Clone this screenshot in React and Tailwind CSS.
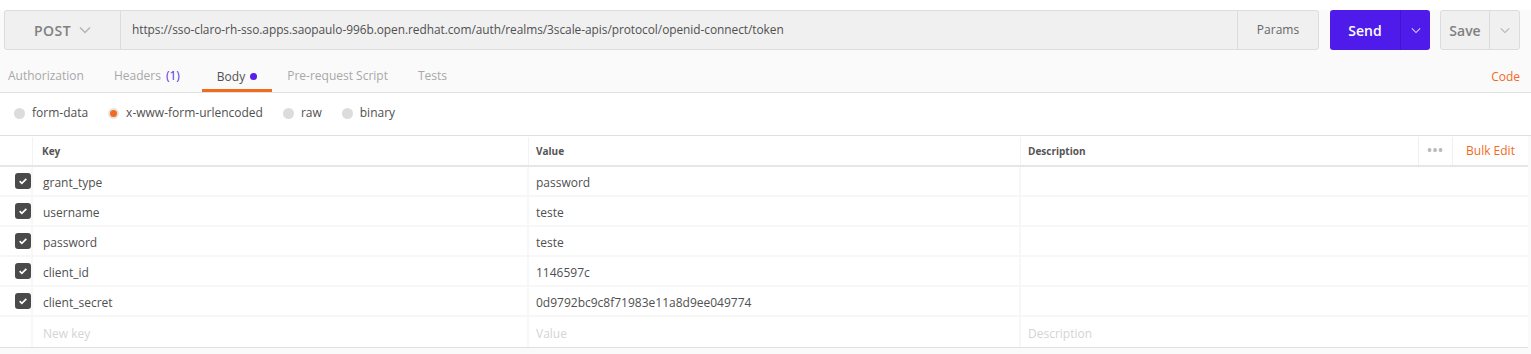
import React from "react";

const Chevron = ({ className }) => (
  <svg viewBox="0 0 12 8" className={className} fill="none" stroke="currentColor" strokeWidth="1.3">
    <path d="M1 1.5l5 5 5-5" />
  </svg>
);

const Check = () => (
  <div className="w-4 h-4 rounded-[3px] bg-[#4a4a4a] flex items-center justify-center">
    <svg viewBox="0 0 12 12" className="w-[10px] h-[10px]" fill="none" stroke="white" strokeWidth="2">
      <path d="M2 6.2l2.6 2.6L10 3.4" />
    </svg>
  </div>
);

const Radio = ({ label, on }) => (
  <label className="flex items-center mr-[20px]">
    <span
      className={`w-[11px] h-[11px] rounded-full mr-[7px] flex items-center justify-center ${
        on ? "bg-[#e5e5e5]" : "bg-[#dcdcdc]"
      }`}
    >
      {on && <span className="w-[7px] h-[7px] rounded-full bg-[#f26b1d]" />}
    </span>
    <span>{label}</span>
  </label>
);

const rows = [
  ["grant_type", "password"],
  ["username", "teste"],
  ["password", "teste"],
  ["client_id", "1146597c"],
  ["client_secret", "0d9792bc9c8f71983e11a8d9ee049774"],
];

export default function App() {
  return (
    <div
      className="min-h-screen bg-[#fafafa] text-[#505050] text-[12px]"
      style={{ fontFamily: '"Open Sans", "Liberation Sans", sans-serif' }}
    >
      {/* request bar */}
      <div className="flex items-stretch h-[40px] mt-[10px] pl-[4px] pr-[11px]">
        <div className="flex flex-1 border border-[#dcdcdc] rounded-[3px] bg-[#f0f0f0]">
          <div className="w-[116px] flex items-center justify-center border-r border-[#dcdcdc] text-[14px] font-semibold text-[#808080] tracking-[0.5px]">
            <span>POST</span>
            <Chevron className="w-[12px] h-[8px] ml-[8px] text-[#b3b3b3]" />
          </div>
          <div className="flex-1 flex items-center pl-[11px] text-[11.9px] tracking-[-0.05px] text-[#505050]">
            https://sso-claro-rh-sso.apps.saopaulo-996b.open.redhat.com/auth/realms/3scale-apis/protocol/openid-connect/token
          </div>
          <div className="w-[81px] flex items-center justify-center border-l border-[#dcdcdc] text-[12px] text-[#666]">
            Params
          </div>
        </div>
        <div className="ml-[11px] w-[100px] flex rounded-[3px] bg-[#4f1bea] text-white">
          <div className="flex-1 flex items-center justify-center text-[14px] font-semibold">Send</div>
          <div className="w-[30px] flex items-center justify-center border-l border-[#4312cc]">
            <Chevron className="w-[10px] h-[7px] text-[#d6ccff]" />
          </div>
        </div>
        <div className="ml-[10px] w-[80px] flex rounded-[3px] bg-[#f0f0f0] border border-[#dcdcdc]">
          <div className="flex-1 flex items-center justify-center text-[14px] font-semibold text-[#808080]">Save</div>
          <div className="w-[30px] flex items-center justify-center border-l border-[#dcdcdc]">
            <Chevron className="w-[10px] h-[7px] text-[#b3b3b3]" />
          </div>
        </div>
      </div>

      {/* tabs */}
      <div className="flex items-stretch h-[33px] mt-[10px] border-b border-[#e0e0e0] pl-[8px] pr-[11px]">
        <div className="flex items-center text-[#a8a8a8] mr-[30px]">Authorization</div>
        <div className="flex items-center text-[#a8a8a8] mr-[22px]">
          Headers <span className="ml-[5px] text-[#5b2de5]">(1)</span>
        </div>
        <div className="flex items-center px-[15px] border-b-[3px] border-[#f26b1d] pt-[4px] text-[#505050]">
          Body <span className="ml-[5px] w-[7px] h-[7px] rounded-full bg-[#5b1de8]" />
        </div>
        <div className="flex items-center text-[#a8a8a8] ml-[15px] mr-[30px]">Pre-request Script</div>
        <div className="flex items-center text-[#a8a8a8]">Tests</div>
        <div className="flex-1" />
        <div className="flex items-end pb-[6px] text-[#f26b1d]">Code</div>
      </div>

      {/* body types */}
      <div className="flex items-center h-[43px] pl-[14px] pb-[2px] border-b border-[#e0e0e0] bg-white">
        <Radio label="form-data" />
        <Radio label="x-www-form-urlencoded" on />
        <Radio label="raw" />
        <Radio label="binary" />
      </div>

      {/* table */}
      <div className="bg-white mr-[3px] border-b border-[#e0e0e0]">
        <div className="flex h-[31px] pt-[1px] border-b-2 border-[#e6e6e6] text-[10px] font-bold text-[#555]">
          <div className="w-[33px] border-r border-[#f3f3f3]" />
          <div className="w-[496px] flex items-center pl-[9px] border-r border-[#f3f3f3]">Key</div>
          <div className="w-[492px] flex items-center pl-[7px] border-r border-[#f3f3f3]">Value</div>
          <div className="flex-1 flex items-center pl-[7px]">Description</div>
          <div className="w-[34px] flex items-center justify-center border-l border-[#f0f0f0] text-[#b8b8b8] text-[12px] tracking-[1px]">
            •••
          </div>
          <div className="w-[76px] flex items-center justify-center border-l border-[#f0f0f0] font-normal text-[12px] text-[#f26b1d]">
            Bulk Edit
          </div>
        </div>
        {rows.map(([k, v]) => (
          <div key={k} className="flex h-[30px] border-b-2 border-[#f7f7f7]">
            <div className="w-[33px] flex items-center justify-end border-r-2 border-[#f7f7f7]">
              <Check />
            </div>
            <div className="w-[496px] flex items-center pt-[4px] pl-[10px] border-r-2 border-[#f7f7f7]">{k}</div>
            <div className="w-[492px] flex items-center pt-[4px] pl-[7px] border-r-2 border-[#f7f7f7]">{v}</div>
            <div className="flex-1" />
          </div>
        ))}
        <div className="flex h-[30px] text-[#d4d4d4]">
          <div className="w-[33px] border-r-2 border-[#f7f7f7]" />
          <div className="w-[496px] flex items-center pt-[4px] pl-[10px] border-r-2 border-[#f7f7f7]">New key</div>
          <div className="w-[492px] flex items-center pt-[4px] pl-[7px] border-r-2 border-[#f7f7f7]">Value</div>
          <div className="flex-1 flex items-center pt-[4px] pl-[7px]">Description</div>
        </div>
      </div>
    </div>
  );
}
